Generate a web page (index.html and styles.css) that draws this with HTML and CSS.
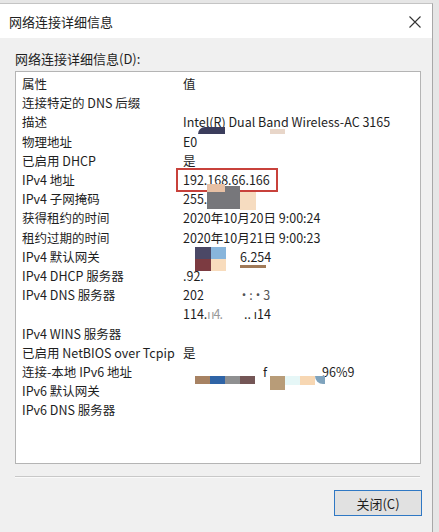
FILE: index.html
```html
<!DOCTYPE html>
<html lang="zh-CN">
<head>
<meta charset="utf-8">
<link rel="stylesheet" href="styles.css">
</head>
<body>
<div class="dialog">
  <div class="titlebar">
    <span class="title">网络连接详细信息</span>
    <svg class="close" width="12" height="12" viewBox="0 0 12 12"><path d="M0.5 0.5 L11.5 11.5 M11.5 0.5 L0.5 11.5" stroke="#333" stroke-width="1.1" fill="none"/></svg>
  </div>
  <div class="body">
    <div class="label">网络连接详细信息(D):</div>
    <div class="listbox">
      <div class="grid">
        <span>属性</span><span>值</span>
        <span>连接特定的 DNS 后缀</span><span></span>
        <span>描述</span><span>Intel(R) Dual Band Wireless-AC 3165</span>
        <span>物理地址</span><span>E0</span>
        <span>已启用 DHCP</span><span>是</span>
        <span>IPv4 地址</span><span class="hl-cell"><span class="hl">192.168.66.166</span></span>
        <span>IPv4 子网掩码</span><span>255.</span>
        <span>获得租约的时间</span><span>2020年10月20日 9:00:24</span>
        <span>租约过期的时间</span><span>2020年10月21日 9:00:23</span>
        <span>IPv4 默认网关</span><span class="gw">6.254</span>
        <span>IPv4 DHCP 服务器</span><span>.92.</span>
        <span>IPv4 DNS 服务器</span><span>202<span class="gap1">·:·3</span></span>
        <span></span><span>114.<span class="faint">ı ı4.</span><span class="gap2">.. ı14</span></span>
        <span>IPv4 WINS 服务器</span><span></span>
        <span>已启用 NetBIOS over Tcpip</span><span>是</span>
        <span>连接-本地 IPv6 地址</span><span class="ll">f<span class="gap3">96%9</span></span>
        <span>IPv6 默认网关</span><span></span>
        <span>IPv6 DNS 服务器</span><span></span>
      </div>
      <div class="blot b1"></div>
      <div class="blot b2"></div>
      <div class="blot b3a"></div>
      <div class="blot b3b"></div>
      <div class="blot b3c"></div>
      <div class="blot b4a"></div><div class="blot b4b"></div><div class="blot b4c"></div><div class="blot b4d"></div>
      <div class="blot b4e"></div>
      <div class="blot b5a"></div><div class="blot b5b"></div><div class="blot b5c"></div><div class="blot b5d"></div>
      <div class="blot b5e"></div><div class="blot b5f"></div><div class="blot b5g"></div><div class="blot b5h"></div>
    </div>
    <div class="sep"></div>
    <div class="footer">
      <button class="btn">关闭(C)</button>
    </div>
  </div>
</div>
</body>
</html>
```
FILE: styles.css
```css
html, body {
  margin: 0;
  padding: 0;
  background: #e6e6e6;
  height: 532px;
  overflow: hidden;
}
body {
  font-family: "Noto Sans CJK SC", "Noto Sans", sans-serif;
  font-size: 12.5px;
  color: #1e1e1e;
}
.dialog {
  margin-top: 3px;
  width: 432px;
  height: 529px;
  border-top: 1px solid #c4c4c4;
  border-right: 1px solid #a8a8a8;
  background: #f0f0f0;
  display: flex;
  flex-direction: column;
}
.titlebar {
  height: 34px;
  background: #ffffff;
  display: flex;
  align-items: center;
  justify-content: space-between;
  padding: 0 11px 0 9px;
  flex: none;
}
.title {
  font-size: 13px;
  color: #222;
}
.close {
  display: block;
  margin-top: 1px;
}
.body {
  padding: 12px 11px 0 15px;
  display: flex;
  flex-direction: column;
}
.label {
  line-height: 18px;
  font-size: 13px;
  margin-bottom: 3px;
}
.listbox {
  position: relative;
  height: 393px;
  background: #fff;
  border: 1px solid #b4b4b4;
  padding: 2px 0 0 6px;
  box-sizing: border-box;
  overflow: hidden;
}
.grid {
  display: grid;
  grid-template-columns: 161px 1fr;
  grid-auto-rows: 19.2px;
  align-items: center;
  white-space: nowrap;
}
.hl-cell { position: relative; }
.hl {
  display: inline-block;
  outline: 2px solid #c8413b;
  outline-offset: 0;
  padding: 2px 6px 2px 5px;
  margin-left: -5px;
  line-height: 16px;
}
.gw { padding-left: 57px; }
.gap1 { margin-left: 34px; letter-spacing: -1px; color: #555; }
.faint { color: #999; letter-spacing: -1px; }
.gap2 { margin-left: 22px; }
.ll { padding-left: 80px; }
.gap3 { margin-left: 55px; }
.blot { position: absolute; }
.b1 { left: 182px; top: 55px; width: 27px; height: 7px; background: #3b3d5c; border-radius: 10px 0 0 0; }
.b2 { left: 254px; top: 57px; width: 15px; height: 5px; background: #e8d6c9; }
.b3a { left: 191px; top: 114px; width: 33px; height: 23px; background: #77777b; }
.b3b { left: 191px; top: 112px; width: 18px; height: 8px; background: #e7c0a4; }
.b3c { left: 224px; top: 120px; width: 16px; height: 18px; background: #f6dcc0; }
.b4a { left: 179px; top: 175px; width: 16px; height: 12px; background: #4b4866; }
.b4b { left: 195px; top: 175px; width: 15px; height: 12px; background: #88b5db; }
.b4c { left: 179px; top: 187px; width: 16px; height: 12px; background: #7c3b41; }
.b4d { left: 195px; top: 187px; width: 15px; height: 12px; background: #f8dcbd; }
.b4e { left: 224px; top: 193px; width: 26px; height: 3px; background: #a07a58; }
.b5a { left: 179px; top: 304px; width: 15px; height: 8px; background: #a78263; }
.b5b { left: 194px; top: 304px; width: 15px; height: 8px; background: #2f64a6; }
.b5c { left: 209px; top: 304px; width: 15px; height: 8px; background: #8f9091; }
.b5d { left: 224px; top: 304px; width: 15px; height: 8px; background: #745656; }
.b5e { left: 254px; top: 304px; width: 15px; height: 14px; background: #b89c78; }
.b5f { left: 269px; top: 304px; width: 15px; height: 9px; background: #e6f7f7; }
.b5g { left: 284px; top: 304px; width: 15px; height: 9px; background: #f7d7b3; }
.b5h { left: 299px; top: 304px; width: 10px; height: 8px; background: #7fa3bd; border-radius: 0 0 0 8px; }
.sep {
  margin-top: 12px;
  height: 0;
  border-top: 1px solid #c8c8c8;
  border-bottom: 1px solid #fafafa;
  margin-right: 1px;
}
.footer {
  display: flex;
  justify-content: flex-end;
  padding-top: 12px;
}
.btn {
  width: 88px;
  height: 26px;
  border: 1px solid #2f78c4;
  background: #e1e1e1;
  font-family: inherit;
  font-size: 13px;
  color: #1e1e1e;
  padding: 0;
  margin-right: -1px;
}
```
